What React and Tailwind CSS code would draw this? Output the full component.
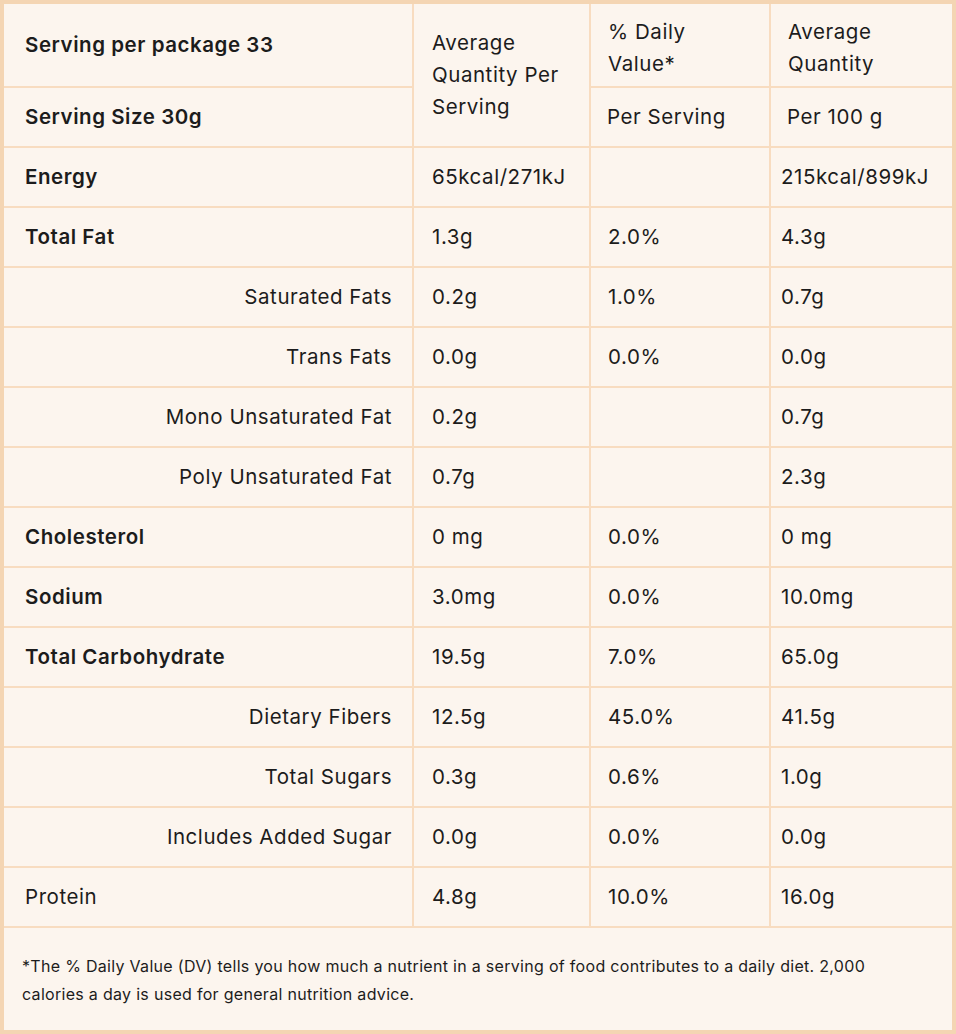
const rows = [
  { name: "Energy", bold: true, a: "65kcal/271kJ", dv: "", b: "215kcal/899kJ" },
  { name: "Total Fat", bold: true, a: "1.3g", dv: "2.0%", b: "4.3g" },
  { name: "Saturated Fats", sub: true, a: "0.2g", dv: "1.0%", b: "0.7g" },
  { name: "Trans Fats", sub: true, a: "0.0g", dv: "0.0%", b: "0.0g" },
  { name: "Mono Unsaturated Fat", sub: true, a: "0.2g", dv: "", b: "0.7g" },
  { name: "Poly Unsaturated Fat", sub: true, a: "0.7g", dv: "", b: "2.3g" },
  { name: "Cholesterol", bold: true, a: "0 mg", dv: "0.0%", b: "0 mg" },
  { name: "Sodium", bold: true, a: "3.0mg", dv: "0.0%", b: "10.0mg" },
  { name: "Total Carbohydrate", bold: true, a: "19.5g", dv: "7.0%", b: "65.0g" },
  { name: "Dietary Fibers", sub: true, a: "12.5g", dv: "45.0%", b: "41.5g" },
  { name: "Total Sugars", sub: true, a: "0.3g", dv: "0.6%", b: "1.0g" },
  { name: "Includes Added Sugar", sub: true, a: "0.0g", dv: "0.0%", b: "0.0g" },
  { name: "Protein", a: "4.8g", dv: "10.0%", b: "16.0g" },
];

const cell = "border-2 border-[#f8dcc0] px-[18px] align-middle";

export default function App() {
  return (
    <div
      className="h-[1034px] w-[956px] bg-[#fcf5ee] text-[#1c1c1c]"
      style={{ fontFamily: "Inter, 'Noto Sans', sans-serif" }}
    >
      <div className="border-4 border-[#f4d5b3]">
        <table className="w-full table-fixed border-collapse border-hidden text-[20.5px] leading-[32px] tracking-[0.55px]">
          <colgroup>
            <col className="w-[409px]" />
            <col className="w-[177px]" />
            <col className="w-[180px]" />
            <col />
          </colgroup>
          <tbody>
            <tr className="h-[83px]">
              <td className={`${cell} pl-[21px] font-semibold`}>Serving per package 33</td>
              <td rowSpan={2} className={cell}>
                Average Quantity Per Serving
              </td>
              <td className={`${cell} pl-[17px] pt-[6px]`}>% Daily Value*</td>
              <td className={`${cell} pl-[17px] pt-[6px]`}>Average Quantity</td>
            </tr>
            <tr className="h-[60px]">
              <td className={`${cell} pl-[21px] font-semibold`}>Serving Size 30g</td>
              <td className={`${cell} pl-[16px]`}>Per Serving</td>
              <td className={`${cell} pl-[16px]`}>Per 100 g</td>
            </tr>
            {rows.map((row) => (
              <tr key={row.name} className="h-[60px]">
                <td
                  className={`${cell} ${row.sub ? "pr-[20px] text-right" : "pl-[21px]"} ${row.bold ? "font-semibold" : ""}`}
                >
                  {row.name}
                </td>
                <td className={cell}>{row.a}</td>
                <td className={`${cell} pl-[17px]`}>{row.dv}</td>
                <td className={`${cell} pl-[10px]`}>{row.b}</td>
              </tr>
            ))}
            <tr className="h-[103px]">
              <td colSpan={4} className={`${cell} pl-[18px] pr-[40px] pt-[2px] text-[16px] leading-[28px] tracking-[0.3px]`}>
                *The % Daily Value (DV) tells you how much a nutrient in a serving of food contributes to a daily diet. 2,000{" "}
                <br />
                calories a day is used for general nutrition advice.
              </td>
            </tr>
          </tbody>
        </table>
      </div>
    </div>
  );
}
